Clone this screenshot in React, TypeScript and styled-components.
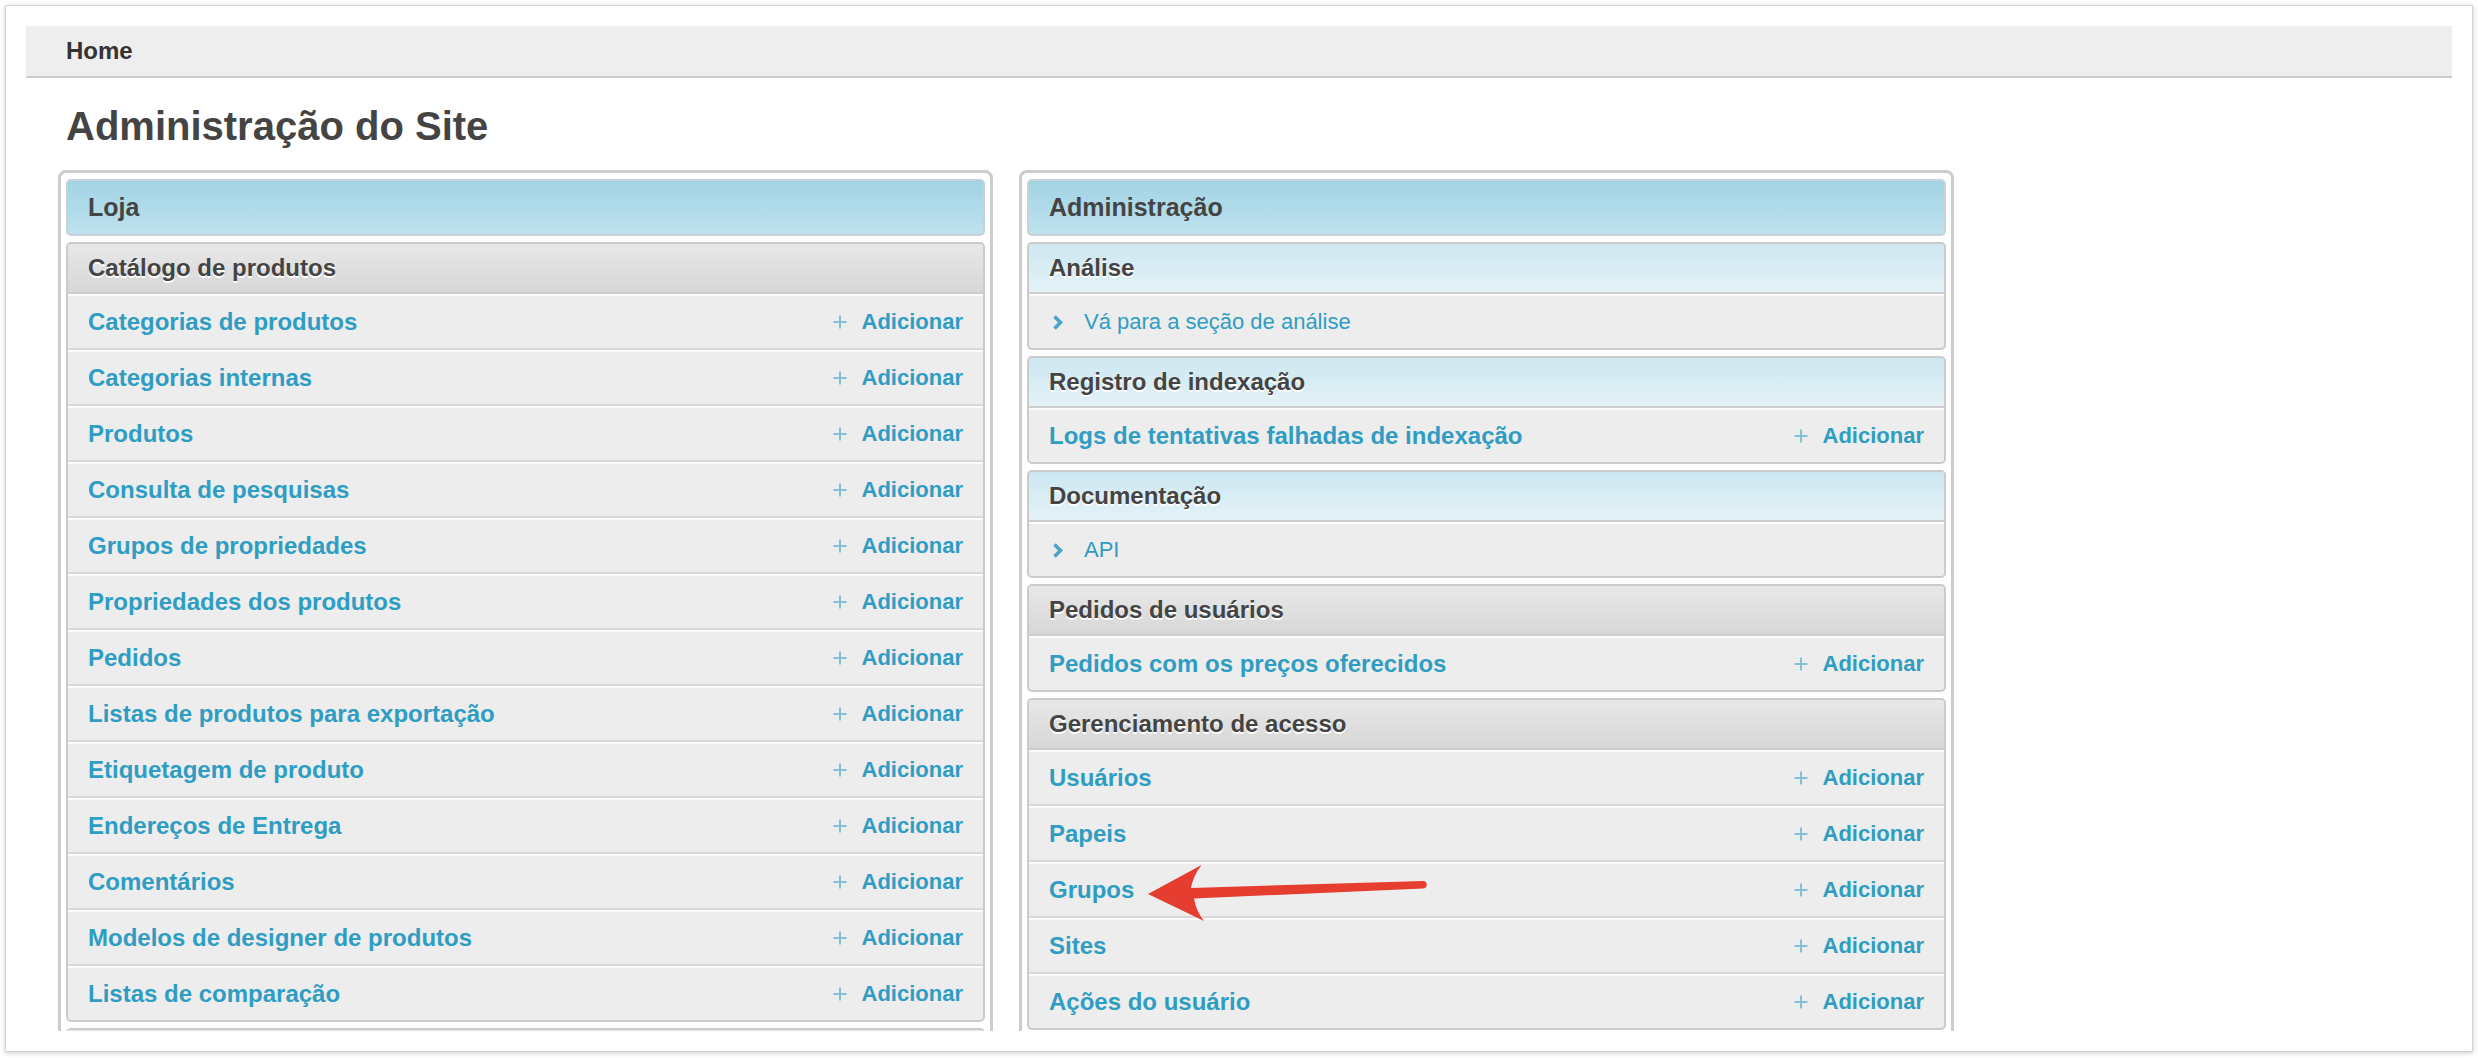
import React from 'react';
import styled, { createGlobalStyle } from 'styled-components';

const GlobalStyle = createGlobalStyle`
  html, body {
    margin: 0;
    padding: 0;
    background: #fff;
    overflow: hidden;
  }
  body {
    font-family: "Liberation Sans", Arial, Helvetica, sans-serif;
  }
  * {
    box-sizing: border-box;
  }
`;

type Tone = 'blue' | 'grey';

type Item = {
  label: string;
  kind: 'model' | 'nav';
  add?: boolean;
  pointer?: boolean;
};

type Group = {
  title: string;
  tone: Tone;
  items: Item[];
};

type Block = {
  title: string;
  groups: Group[];
};

const model = (label: string, pointer = false): Item => ({ label, kind: 'model', add: true, pointer });

const columns: Block[] = [
  {
    title: 'Loja',
    groups: [
      {
        title: 'Catálogo de produtos',
        tone: 'grey',
        items: [
          model('Categorias de produtos'),
          model('Categorias internas'),
          model('Produtos'),
          model('Consulta de pesquisas'),
          model('Grupos de propriedades'),
          model('Propriedades dos produtos'),
          model('Pedidos'),
          model('Listas de produtos para exportação'),
          model('Etiquetagem de produto'),
          model('Endereços de Entrega'),
          model('Comentários'),
          model('Modelos de designer de produtos'),
          model('Listas de comparação'),
        ],
      },
      // only the top edge of the next group shows above the fold
      { title: '', tone: 'grey', items: [] },
    ],
  },
  {
    title: 'Administração',
    groups: [
      {
        title: 'Análise',
        tone: 'blue',
        items: [{ label: 'Vá para a seção de análise', kind: 'nav' }],
      },
      {
        title: 'Registro de indexação',
        tone: 'blue',
        items: [model('Logs de tentativas falhadas de indexação')],
      },
      {
        title: 'Documentação',
        tone: 'blue',
        items: [{ label: 'API', kind: 'nav' }],
      },
      {
        title: 'Pedidos de usuários',
        tone: 'grey',
        items: [model('Pedidos com os preços oferecidos')],
      },
      {
        title: 'Gerenciamento de acesso',
        tone: 'grey',
        items: [
          model('Usuários'),
          model('Papeis'),
          model('Grupos', true),
          model('Sites'),
          model('Ações do usuário'),
        ],
      },
    ],
  },
];

function PlusIcon() {
  return (
    <svg width="14" height="14" viewBox="0 0 14 14">
      <path d="M7 0.5v13M0.5 7h13" stroke="#84bfd3" strokeWidth="2" fill="none" />
    </svg>
  );
}

function ChevronIcon() {
  return (
    <svg width="12" height="15" viewBox="0 0 12 15">
      <path d="M2.5 1.5L8.5 7.5L2.5 13.5" stroke="#4aa5c8" strokeWidth="3.6" fill="none" />
    </svg>
  );
}

function RedArrow() {
  return (
    <ArrowMark width="300" height="75" viewBox="0 0 300 75">
      <path
        d="M8 38 L61.5 9 Q53 20 51 32 L283 25 A3.7 3.7 0 0 1 283 32.4 L54 42.5 Q56 55 64 65 Z"
        fill="#e53d2f"
      />
    </ArrowMark>
  );
}

export default function App() {
  return (
    <>
      <GlobalStyle />
      <Page>
        <Breadcrumbs>Home</Breadcrumbs>
        <Content>
          <Title>Administração do Site</Title>
          <Columns>
            {columns.map((block) => (
              <Module key={block.title}>
                <ModuleHeader>{block.title}</ModuleHeader>
                {block.groups.map((group, i) => (
                  <Section key={i}>
                    <SectionHeader $tone={group.tone}>{group.title}</SectionHeader>
                    {group.items.map((item) => (
                      <Row key={item.label}>
                        {item.kind === 'nav' ? (
                          <NavLink>
                            <ChevronIcon />
                            <span>{item.label}</span>
                          </NavLink>
                        ) : (
                          <ModelLink>{item.label}</ModelLink>
                        )}
                        {item.add && (
                          <AddLink>
                            <PlusIcon />
                            <span>Adicionar</span>
                          </AddLink>
                        )}
                        {item.pointer && <RedArrow />}
                      </Row>
                    ))}
                  </Section>
                ))}
              </Module>
            ))}
          </Columns>
        </Content>
      </Page>
    </>
  );
}

const Page = styled.div`
  margin: 5px;
  height: 1047px;
  background: #fff;
  border: 1px solid #d4d4d4;
  box-shadow: 0 1px 5px rgba(0, 0, 0, 0.2);
  padding: 20px;
  display: flex;
  flex-direction: column;
`;

const Breadcrumbs = styled.div`
  flex: none;
  height: 52px;
  background: #eeeeee;
  border-bottom: 2px solid #cccccc;
  padding-left: 40px;
  display: flex;
  align-items: center;
  font-size: 24px;
  font-weight: bold;
  color: #333;
`;

const Content = styled.div`
  flex: 1;
  min-height: 0;
  overflow: hidden;
  padding: 0 32px;
`;

const Title = styled.h1`
  margin: 25px 0 21px;
  padding-left: 8px;
  font-size: 40px;
  line-height: 46px;
  font-weight: bold;
  color: #444;
`;

const Columns = styled.div`
  display: flex;
  gap: 26px;
  align-items: flex-start;
`;

const Module = styled.div`
  width: 935px;
  border: 3px solid #cccccc;
  border-radius: 8px;
  padding: 6px 5px 0;
`;

const ModuleHeader = styled.div`
  height: 57px;
  margin-bottom: 6px;
  border: 2px solid #c5d2d7;
  border-radius: 5px;
  background: linear-gradient(#a2d3e5, #bee2ee);
  padding-left: 20px;
  display: flex;
  align-items: center;
  font-size: 25px;
  font-weight: bold;
  color: #444;
`;

const Section = styled.div`
  margin-bottom: 6px;
  border: 2px solid #cbcbcb;
  border-radius: 5px;
  overflow: hidden;
  background: #ededed;
`;

const SectionHeader = styled.div<{ $tone: Tone }>`
  height: 50px;
  border-bottom: 2px solid #cdcdcd;
  padding-left: 20px;
  display: flex;
  align-items: center;
  font-size: 24px;
  font-weight: bold;
  color: #444;
  text-shadow: 0 2px 0 #fff;
  background: ${(p) =>
    p.$tone === 'blue'
      ? 'linear-gradient(#cde7f1, #e4f2f7)'
      : 'linear-gradient(#e8e8e8, #d7d7d7)'};
`;

const Row = styled.div`
  position: relative;
  height: 56px;
  border-top: 2px solid #fbfbfb;
  border-bottom: 2px solid #d9d9d9;
  padding: 0 20px;
  display: flex;
  align-items: center;
  justify-content: space-between;

  &:last-child {
    height: 54px;
    border-bottom: none;
  }
`;

const ModelLink = styled.a`
  font-size: 24px;
  font-weight: bold;
  color: #2f9dc3;
  text-decoration: none;
`;

const NavLink = styled.a`
  display: flex;
  align-items: center;
  gap: 20px;
  padding-left: 3px;
  font-size: 22px;
  color: #2f9dc3;
  text-decoration: none;
`;

const AddLink = styled.a`
  display: flex;
  align-items: center;
  gap: 15px;
  font-size: 22px;
  font-weight: bold;
  color: #2f9dc3;
  text-decoration: none;
`;

const ArrowMark = styled.svg`
  position: absolute;
  left: 111px;
  top: -8px;
  z-index: 2;
  pointer-events: none;
`;
